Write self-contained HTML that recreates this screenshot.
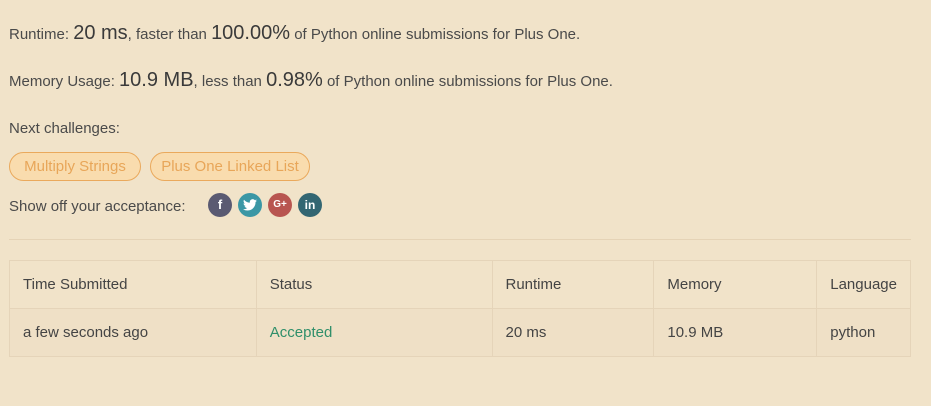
<!DOCTYPE html>
<html><head><style>
body{margin:0;background:#f1e3c9;font-family:"Liberation Sans",sans-serif;color:#4a4a4a;font-size:15px;width:931px;height:406px;overflow:hidden;position:relative}
.a{position:absolute;left:9px;white-space:nowrap}
.big{font-size:20px;color:#3a3a3a}
.tag{position:absolute;top:152px;height:27px;border:1px solid #eaa95c;background:#f9dcae;border-radius:15px;color:#e8a659;line-height:27px;text-align:center;font-size:15px}
.c{position:absolute;top:193px;width:24px;height:24px;border-radius:50%;color:#fff;font-weight:bold;font-size:13px;line-height:24px;text-align:center}
table{position:absolute;left:9px;top:260px;width:902px;border-collapse:collapse}
td{border:1px solid #e5d4b9;height:47px;padding:0 13px;font-size:15px;color:#444}
tr.r2 td{background:#efe0c6}
</style></head><body>
<div class="a" style="top:22px">Runtime: <span class="big">20 ms</span>, faster than <span class="big">100.00%</span> of Python online submissions for Plus One.</div>
<div class="a" style="top:69px">Memory Usage: <span class="big">10.9 MB</span>, less than <span class="big">0.98%</span> of Python online submissions for Plus One.</div>
<div class="a" style="top:120px">Next challenges:</div>
<div class="tag" style="left:9px;width:130px">Multiply Strings</div>
<div class="tag" style="left:150px;width:158px">Plus One Linked List</div>
<div class="a" style="top:198px">Show off your acceptance:</div>
<div class="c" style="left:208px;background:#5a5a72">f</div>
<div class="c" style="left:238px;background:#3b97a5"><svg width="14" height="12" viewBox="0 0 24 20" style="margin-top:6px"><path fill="#fff" d="M24 2.4a10 10 0 0 1-2.8.8A5 5 0 0 0 23.3.5a10 10 0 0 1-3.1 1.2A4.9 4.9 0 0 0 11.8 6 14 14 0 0 1 1.7.9a4.9 4.9 0 0 0 1.5 6.6A4.9 4.9 0 0 1 1 6.9a4.9 4.9 0 0 0 3.9 4.8 5 5 0 0 1-2.2.1 4.9 4.9 0 0 0 4.6 3.4A9.9 9.9 0 0 1 0 17.3 14 14 0 0 0 7.5 19.5c9 0 14-7.5 14-14v-.6A10 10 0 0 0 24 2.4z"/></svg></div>
<div class="c" style="left:268px;background:#b85550;font-size:10px">G+</div>
<div class="c" style="left:298px;background:#336672;font-size:12px">in</div>
<div style="position:absolute;left:9px;top:239px;width:902px;height:1px;background:#e5d3b6"></div>
<table>
<tr><td style="width:220px">Time Submitted</td><td style="width:209px">Status</td><td style="width:135px">Runtime</td><td style="width:136px">Memory</td><td>Language</td></tr>
<tr class="r2"><td>a few seconds ago</td><td style="color:#2f8f6a">Accepted</td><td>20 ms</td><td>10.9 MB</td><td>python</td></tr>
</table>
</body></html>
